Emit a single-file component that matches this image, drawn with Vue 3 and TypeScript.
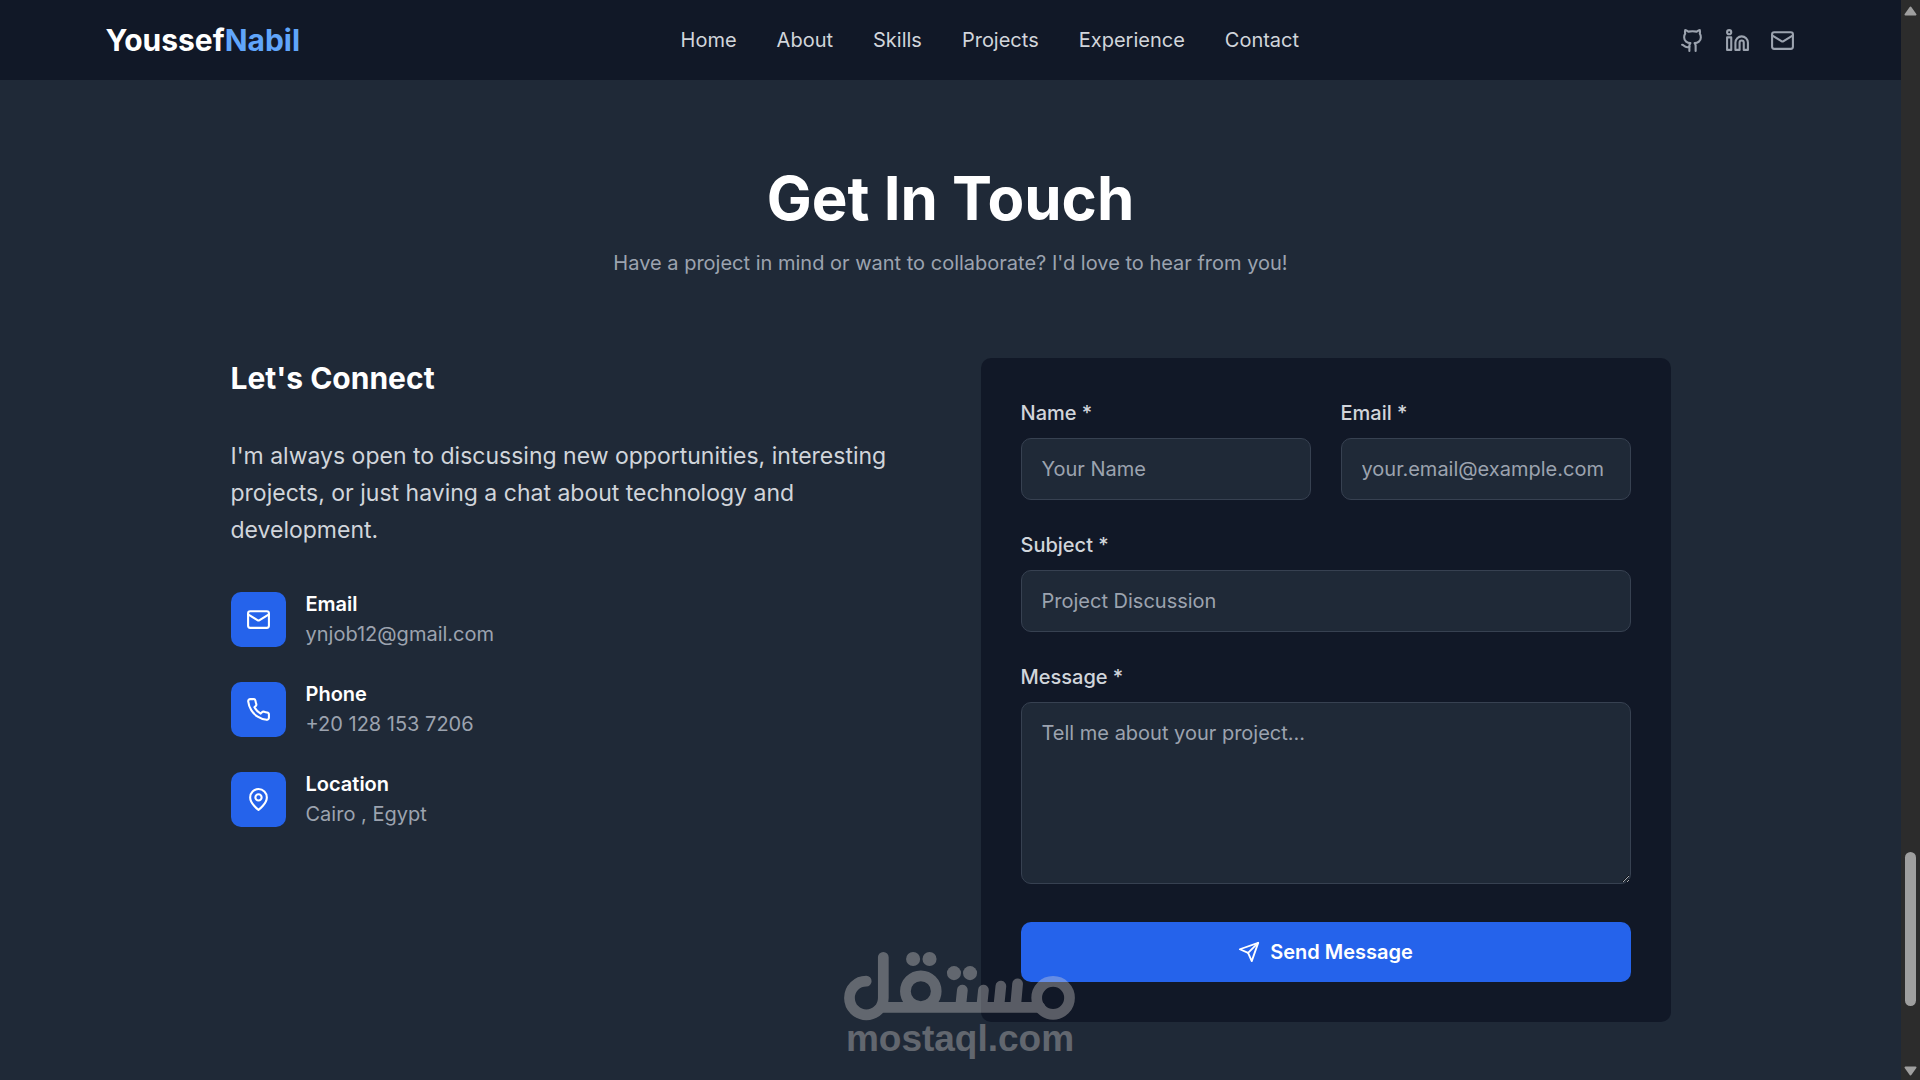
<script setup lang="ts">
import { reactive } from 'vue'

type IconName = 'github' | 'linkedin' | 'mail' | 'phone' | 'pin' | 'send'

const icons: Record<IconName, string> = {
  github:
    '<path d="M15 22v-4a4.8 4.8 0 0 0-1-3.500c3 0 6-2 6-5.500.080-1.250-.270-2.480-1-3.500.280-1.150.280-2.350 0-3.500 0 0-1 0-3 1.500-2.640-.500-5.360-.500-8 0C6 2 5 2 5 2c-.300 1.150-.300 2.350 0 3.500A5.403 5.403 0 0 0 4 9c0 3.500 3 5.500 6 5.500-.390.490-.680 1.050-.850 1.650-.170.600-.220 1.230-.150 1.850v4"/><path d="M9 18c-4.510 2-5-2-7-2"/>',
  linkedin:
    '<path d="M16 8a6 6 0 0 1 6 6v7h-4v-7a2 2 0 0 0-4 0v7h-4v-7a6 6 0 0 1 6-6z"/><rect width="4" height="12" x="2" y="9"/><circle cx="4" cy="4" r="2"/>',
  mail: '<rect width="20" height="16" x="2" y="4" rx="2"/><path d="m22 7-8.970 5.700a1.940 1.940 0 0 1-2.060 0L2 7"/>',
  phone:
    '<path d="M22 16.920v3a2 2 0 0 1-2.180 2 19.790 19.790 0 0 1-8.630-3.070 19.500 19.500 0 0 1-6-6 19.790 19.790 0 0 1-3.070-8.670A2 2 0 0 1 4.110 2h3a2 2 0 0 1 2 1.720 12.840 12.840 0 0 0 .700 2.810 2 2 0 0 1-.450 2.110L8.090 9.910a16 16 0 0 0 6 6l1.270-1.270a2 2 0 0 1 2.110-.450 12.840 12.840 0 0 0 2.810.700A2 2 0 0 1 22 16.920z"/>',
  pin: '<path d="M20 10c0 6-8 12-8 12s-8-6-8-12a8 8 0 0 1 16 0Z"/><circle cx="12" cy="10" r="3"/>',
  send: '<path d="m22 2-7 20-4-9-9-4Z"/><path d="M22 2 11 13"/>',
}

const links: string[] = ['Home', 'About', 'Skills', 'Projects', 'Experience', 'Contact']

const socials: { icon: IconName; label: string }[] = [
  { icon: 'github', label: 'GitHub' },
  { icon: 'linkedin', label: 'LinkedIn' },
  { icon: 'mail', label: 'Email' },
]

const details: { icon: IconName; title: string; value: string }[] = [
  { icon: 'mail', title: 'Email', value: 'ynjob12@gmail.com' },
  { icon: 'phone', title: 'Phone', value: '+20 128 153 7206' },
  { icon: 'pin', title: 'Location', value: 'Cairo , Egypt' },
]

const form = reactive({ name: '', email: '', subject: '', message: '' })
</script>

<template>
  <div class="page">
    <div class="content">
      <header class="navbar">
        <div class="navbar-inner">
          <a class="brand" href="#home">Youssef<span>Nabil</span></a>
          <nav class="links">
            <a v-for="link in links" :key="link" :href="'#' + link.toLowerCase()">{{ link }}</a>
          </nav>
          <div class="socials">
            <a v-for="s in socials" :key="s.label" href="#contact" :aria-label="s.label">
              <svg class="icon" viewBox="0 0 24 24" v-html="icons[s.icon]" />
            </a>
          </div>
        </div>
      </header>

      <main id="contact" class="contact">
        <div class="heading">
          <h1>Get In Touch</h1>
          <p>Have a project in mind or want to collaborate? I'd love to hear from you!</p>
        </div>

        <div class="columns">
          <section class="info">
            <h2>Let's Connect</h2>
            <p class="intro">
              I'm always open to discussing new opportunities, interesting projects, or just having a
              chat about technology and development.
            </p>
            <ul class="details">
              <li v-for="d in details" :key="d.title">
                <span class="badge">
                  <svg class="icon" viewBox="0 0 24 24" v-html="icons[d.icon]" />
                </span>
                <div>
                  <h3>{{ d.title }}</h3>
                  <p>{{ d.value }}</p>
                </div>
              </li>
            </ul>
          </section>

          <form class="card" @submit.prevent>
            <div class="pair">
              <div class="field">
                <label for="name">Name *</label>
                <input id="name" v-model="form.name" type="text" placeholder="Your Name" />
              </div>
              <div class="field">
                <label for="email">Email *</label>
                <input id="email" v-model="form.email" type="email" placeholder="your.email@example.com" />
              </div>
            </div>
            <div class="field">
              <label for="subject">Subject *</label>
              <input id="subject" v-model="form.subject" type="text" placeholder="Project Discussion" />
            </div>
            <div class="field">
              <label for="message">Message *</label>
              <textarea id="message" v-model="form.message" rows="5" placeholder="Tell me about your project..."></textarea>
            </div>
            <button type="submit" class="send">
              <svg class="icon small" viewBox="0 0 24 24" v-html="icons.send" />
              Send Message
            </button>
          </form>
        </div>
      </main>
    </div>

    <div class="scrollbar" aria-hidden="true">
      <svg class="arrow" viewBox="0 0 13 10"><path d="M6.500 1.500 11.500 8.500H1.500Z" /></svg>
      <div class="track"><div class="thumb"></div></div>
      <svg class="arrow" viewBox="0 0 13 10"><path d="M6.500 8.500 1.500 1.500H11.500Z" /></svg>
    </div>

    <div class="watermark">
      <svg viewBox="75 60 692 212" role="img" aria-label="مستقل">
        <g class="strokes">
          <circle cx="699" cy="203" r="49" />
          <path d="M192 231H660" />
          <path d="M593 161 587 228M543 168 537 228M491 180 486 228M428 180 423 228" />
          <circle cx="304" cy="183" r="46" />
          <path d="M192 82V203A50 50 0 0 1 91 203A50 50 0 0 1 141 153" />
        </g>
        <g class="dots">
          <circle cx="281" cy="87" r="21" />
          <circle cx="330" cy="87" r="21" />
          <circle cx="403" cy="129" r="21" />
          <circle cx="451" cy="129" r="21" />
        </g>
      </svg>
      <span>mostaql.com</span>
    </div>
  </div>
</template>

<style>
body {
  margin: 0;
  background: #1f2937;
}
</style>

<style scoped>
* {
  box-sizing: border-box;
}

.page {
  position: relative;
  display: flex;
  min-height: 100vh;
  background: #1f2937;
  color: #fff;
  font-family: Inter, 'Liberation Sans', sans-serif;
  font-size: 20px;
  line-height: 30px;
}

h1,
h2,
h3,
p,
ul {
  margin: 0;
  padding: 0;
}

a {
  color: inherit;
  text-decoration: none;
}

.content {
  flex: 1;
  min-width: 0;
}

.icon {
  display: block;
  width: 25px;
  height: 25px;
  fill: none;
  stroke: currentColor;
  stroke-width: 2;
  stroke-linecap: round;
  stroke-linejoin: round;
}

.icon.small {
  width: 22px;
  height: 22px;
}

.navbar {
  background: #111827;
}

.navbar-inner {
  display: flex;
  align-items: center;
  justify-content: space-between;
  max-width: 1750px;
  height: 80px;
  margin: 0 auto;
  padding: 0 31px 0 30px;
}

.brand {
  font-size: 30px;
  font-weight: 700;
}

.brand span {
  color: #60a5fa;
}

.links {
  display: flex;
  gap: 40px;
  color: #d1d5db;
}

.socials {
  display: flex;
  gap: 20px;
  color: #9ca3af;
}

.contact {
  padding: 88px 30px 56px;
}

.heading {
  display: flex;
  flex-direction: column;
  gap: 20px;
  margin-bottom: 80px;
  text-align: center;
}

h1 {
  font-size: 60px;
  font-weight: 700;
  line-height: 60px;
}

.heading p {
  color: #9ca3af;
}

.columns {
  display: grid;
  grid-template-columns: 1fr 1fr;
  gap: 60px;
  max-width: 1440px;
  margin: 0 auto;
}

.info {
  display: flex;
  flex-direction: column;
  gap: 40px;
}

h2 {
  font-size: 30px;
  font-weight: 700;
  line-height: 40px;
}

.intro {
  color: #d1d5db;
  font-size: 23px;
  line-height: 37px;
}

.details {
  display: flex;
  flex-direction: column;
  gap: 30px;
  list-style: none;
}

.details li {
  display: flex;
  align-items: center;
  gap: 20px;
}

.details p {
  color: #9ca3af;
}

.badge {
  padding: 15px;
  border-radius: 10px;
  background: #2563eb;
}

h3 {
  font-size: 20px;
  font-weight: 600;
}

.card {
  display: flex;
  flex-direction: column;
  gap: 30px;
  padding: 40px;
  border-radius: 10px;
  background: #111827;
}

.pair {
  display: grid;
  grid-template-columns: 1fr 1fr;
  gap: 30px;
}

.field {
  display: flex;
  flex-direction: column;
  gap: 10px;
  min-width: 0;
}

label {
  color: #d1d5db;
  font-weight: 500;
}

input,
textarea {
  display: block;
  width: 100%;
  margin: 0;
  padding: 15px 20px;
  border: 1px solid #374151;
  border-radius: 10px;
  outline: none;
  background: #1f2937;
  color: #fff;
  font: inherit;
}

input {
  height: 62px;
}

textarea {
  height: 182px;
  resize: vertical;
  color-scheme: dark;
}

::placeholder {
  color: #9ca3af;
  opacity: 1;
}

.send {
  display: flex;
  align-items: center;
  justify-content: center;
  gap: 10px;
  margin-top: 8px;
  padding: 15px;
  border: 0;
  border-radius: 10px;
  background: #2563eb;
  color: #fff;
  font: inherit;
  font-weight: 600;
  cursor: pointer;
}

.scrollbar {
  display: flex;
  flex-direction: column;
  align-items: center;
  width: 19px;
  padding: 6px 0 4px;
  background: #2c2c2c;
}

.arrow {
  width: 13px;
  height: 10px;
  fill: #9f9f9f;
  stroke: #9f9f9f;
  stroke-width: 2;
  stroke-linejoin: round;
}

.track {
  display: flex;
  flex: 1;
  flex-direction: column;
  justify-content: flex-end;
  padding-bottom: 60px;
}

.thumb {
  width: 11px;
  height: 154px;
  border-radius: 6px;
  background: #9f9f9f;
}

.watermark {
  position: absolute;
  bottom: 23px;
  left: 50%;
  display: flex;
  flex-direction: column;
  align-items: center;
  width: 232px;
  margin-left: -116px;
  color: #e0dcd8;
  font-family: 'Liberation Sans', Arial, sans-serif;
  font-size: 37px;
  font-weight: 700;
  line-height: 36px;
  opacity: 0.35;
  pointer-events: none;
}

.watermark svg {
  width: 232px;
  height: 71px;
}

.strokes {
  fill: none;
  stroke: currentColor;
  stroke-width: 32;
  stroke-linecap: round;
}

.dots {
  fill: currentColor;
}
</style>
